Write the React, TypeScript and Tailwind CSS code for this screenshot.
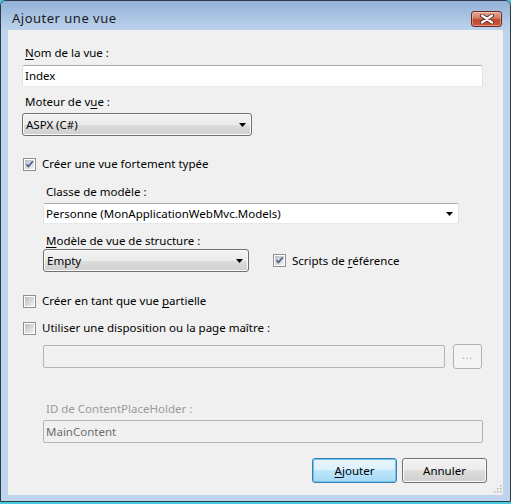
import React from 'react';

const font = { fontFamily: '"Segoe UI", "Noto Sans", sans-serif' };

function Check({ checked }: { checked?: boolean }) {
  return (
    <span className="flex h-[13px] w-[13px] shrink-0 items-center justify-center border border-[#8e8f8f] bg-white">
      <span className="relative flex h-[9px] w-[9px] items-center justify-center bg-gradient-to-br from-[#b9bdc3] to-[#f2f2f2]">
        {checked && (
          <svg width="9" height="9" viewBox="0 0 9 9" className="absolute left-0 top-0">
            <path d="M1.5 4.2 L3.5 6.5 L7.8 1.2" fill="none" stroke="#4a5c8e" strokeWidth="1.6" />
          </svg>
        )}
      </span>
    </span>
  );
}

function Arrow() {
  return (
    <svg width="7" height="4" viewBox="0 0 7 4">
      <path d="M0 0h7L3.5 4z" fill="#000" />
    </svg>
  );
}

function Key({ children }: { children: React.ReactNode }) {
  return <span className="underline decoration-1 underline-offset-2">{children}</span>;
}

// liste déroulante façon bouton (Win7)
function DropButton({ label, width }: { label: string; width: string }) {
  return (
    <div
      className={`flex h-[23px] ${width} items-center rounded-[3px] border border-[#707070] bg-[linear-gradient(#f2f2f2,#ebebeb_50%,#dddddd_50%,#cfcfcf)] pl-[3px] pr-[5px] shadow-[inset_0_0_0_1px_#fbfbfb]`}
    >
      <span className="flex-1 text-black">{label}</span>
      <Arrow />
    </div>
  );
}

export default function App() {
  return (
    <div className="h-[504px] w-[511px] bg-[#45c9dd] text-[11.5px]" style={font}>
      <div className="flex h-[502px] w-[511px] flex-col rounded-t-[6px] border border-[#2d3a48] bg-[#bdd4ec]">
        {/* barre de titre */}
        <div className="flex h-[29px] items-start rounded-t-[5px] bg-gradient-to-b from-[#93b1d6] to-[#bcd3ec] pl-[11px] pr-[8px]">
          <span className="mt-[9px] flex-1 text-[13px] leading-[17px] tracking-[0.5px] text-[#1b1b1b]">Ajouter une vue</span>
          <div className="mt-[10px] flex h-[16px] w-[31px] items-center justify-center rounded-[3px] border border-[#6e2a22] bg-[linear-gradient(#e6a592,#d27a62_45%,#c2482f_55%,#c9583c)] shadow-[inset_0_0_0_1px_rgba(255,255,255,0.35)]">
            <svg width="14" height="10" viewBox="0 0 14 10">
              <path d="M2 1.5 L12 8.5 M12 1.5 L2 8.5" stroke="#5a2a24" strokeWidth="4" strokeLinecap="round" />
              <path d="M2 1.5 L12 8.5 M12 1.5 L2 8.5" stroke="#ffffff" strokeWidth="2.2" strokeLinecap="round" />
            </svg>
          </div>
        </div>

        {/* zone client */}
        <div className="relative mx-[7px] flex h-[465px] flex-col bg-[#f0f0f0] pl-[14px] text-black">
          <div className="mt-[15px] flex h-[16px] items-center pl-[3px]">
            <Key>N</Key>om de la vue :
          </div>
          <div className="mt-[4px] flex h-[22px] w-[461px] items-center rounded-[2px] border border-[#abadb3] border-b-[#e3e9ef] border-x-[#dbdfe6] bg-white pl-[2px]">
            Index
          </div>

          <div className="mt-[7px] flex h-[16px] items-center pl-[3px]">
            Moteur de v<Key>u</Key>e :
          </div>
          <div className="mt-[3px]">
            <DropButton label="ASPX (C#)" width="w-[230px]" />
          </div>

          <div className="mt-[20px] flex h-[16px] items-center gap-[6px] pl-[1px]">
            <Check checked />
            <span>Créer une vue fortement typée</span>
          </div>

          <div className="pl-[21px]">
            <div className="mt-[12px] flex h-[16px] items-center pl-[3px]">Classe de modèle :</div>
            <div className="mt-[3px] flex h-[21px] w-[416px] items-center rounded-[2px] border border-[#abadb3] border-b-[#e3e9ef] border-x-[#dbdfe6] bg-white pl-[2px] pr-[5px]">
              <span className="flex-1">Personne (MonApplicationWebMvc.Models)</span>
              <Arrow />
            </div>
            <div className="mt-[9px] flex h-[16px] items-center pl-[3px]">
              <Key>M</Key>odèle de vue de structure :
            </div>
            <div className="mt-[0px] flex items-center">
              <DropButton label="Empty" width="w-[206px]" />
              <div className="ml-[24px] flex items-center gap-[6px]">
                <Check checked />
                <span>
                  Scripts de <Key>r</Key>éférence
                </span>
              </div>
            </div>
          </div>

          <div className="mt-[21px] flex h-[16px] items-center gap-[6px] pl-[1px]">
            <Check />
            <span>
              Créer en tant que vue <Key>p</Key>artielle
            </span>
          </div>
          <div className="mt-[11px] flex h-[16px] items-center gap-[6px] pl-[1px]">
            <Check />
            <span>Utiliser une disposition ou la page maître :</span>
          </div>

          <div className="pl-[21px]">
            <div className="mt-[8px] flex items-center gap-[8px]">
              <div className="h-[23px] w-[402px] rounded-[2px] border border-[#b4b4b4] bg-[#f0f0f0]" />
              <div className="flex h-[25px] w-[29px] items-center justify-center rounded-[3px] border border-[#adb2b5] bg-[#f4f4f4] pb-[2px] text-[10px] tracking-[1px] text-[#a0a0a0]">
                ...
              </div>
            </div>
            <div className="mt-[32px] flex h-[16px] items-center pl-[3px] text-[#9a9a9a]">
              ID de ContentPlaceHolder :
            </div>
            <div className="mt-[3px] flex h-[23px] w-[440px] items-center rounded-[2px] border border-[#b4b4b4] bg-[#f0f0f0] pl-[2px] text-[#6d6d6d]">
              MainContent
            </div>
          </div>

          <div className="mt-[15px] flex justify-end gap-[5px] pr-[16px]">
            <div className="flex h-[25px] w-[85px] items-center justify-center rounded-[3px] border border-[#3c7fb1] bg-[linear-gradient(#eaf6fd,#d9f0fc_50%,#bee6fd_50%,#a7d9f5)] shadow-[inset_0_0_0_1px_#6ec3ed]">
              <span>
                <Key>A</Key>jouter
              </span>
            </div>
            <div className="flex h-[25px] w-[85px] items-center justify-center rounded-[3px] border border-[#707070] bg-[linear-gradient(#f2f2f2,#ebebeb_50%,#dddddd_50%,#cfcfcf)] shadow-[inset_0_0_0_1px_#fbfbfb]">
              Annuler
            </div>
          </div>

          {/* poignée de redimensionnement */}
          <svg width="8" height="8" viewBox="0 0 8 8" className="absolute bottom-[2px] right-[1px]">
            {[
              [6, 0],
              [6, 3],
              [3, 3],
              [6, 6],
              [3, 6],
              [0, 6],
            ].map(([x, y], i) => (
              <rect key={i} x={x} y={y} width="1.5" height="1.5" fill="#b5b5b5" />
            ))}
          </svg>
        </div>
      </div>
    </div>
  );
}
